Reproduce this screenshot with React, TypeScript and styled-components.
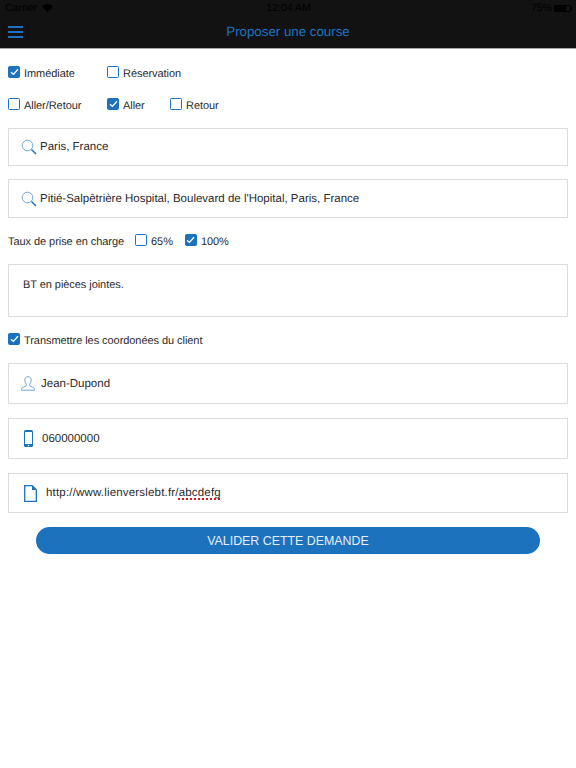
import styled, { createGlobalStyle } from "styled-components"

const GlobalStyle = createGlobalStyle`
    html, body {
        margin: 0;
        padding: 0;
        background: #ffffff;
        font-family: "Liberation Sans", Arial, sans-serif;
        color: #2b2b2b;
        text-rendering: geometricPrecision;
    }
`

const Page = styled.div`
    width: 576px;
    height: 768px;
    overflow: hidden;
    display: flex;
    flex-direction: column;
`

const Header = styled.header`
    height: 49px;
    box-sizing: border-box;
    background: #121212;
    border-bottom: 1px solid #a8a8a8;
    display: flex;
    flex-direction: column;
`

const StatusBar = styled.div`
    height: 16px;
    padding: 0 4px 0 5px;
    display: grid;
    grid-template-columns: 1fr auto 1fr;
    align-items: center;
    font-size: 10.5px;
    color: #000000;
`

const StatusLeft = styled.div`
    display: flex;
    align-items: center;
    gap: 5px;
`

const StatusRight = styled.div`
    display: flex;
    align-items: center;
    justify-content: flex-end;
    gap: 2px;
`

const Battery = styled.span`
    width: 17px;
    height: 7px;
    border: 1px solid #000000;
    box-sizing: border-box;
    border-radius: 1px;
    background: linear-gradient(to right, #000 75%, transparent 75%);
`

const BatteryTip = styled.span`
    width: 1px;
    height: 3px;
    margin-left: -2px;
    background: #000000;
`

const NavBar = styled.div`
    flex: 1;
    position: relative;
    display: flex;
    align-items: center;
    justify-content: center;
    padding-bottom: 1px;
`

const MenuButton = styled.div`
    position: absolute;
    left: 8px;
    top: 10px;
    width: 15px;
    height: 12px;
    display: flex;
    flex-direction: column;
    justify-content: space-between;
`

const MenuLine = styled.span`
    height: 2px;
    background: #1c72bd;
`

const Title = styled.h1`
    margin: 0;
    font-size: 13.3px;
    font-weight: normal;
    color: #1c72bd;
`

const Form = styled.div`
    display: flex;
    flex-direction: column;
    padding: 0 8px;
`

const CheckRow = styled.div<{ $top: number }>`
    display: flex;
    margin-top: ${(p) => p.$top}px;
    height: 16px;
`

const CheckItem = styled.label<{ $width?: number }>`
    display: flex;
    align-items: center;
    gap: 4px;
    font-size: 11px;
    letter-spacing: -0.06px;
    ${(p) => (p.$width ? `width: ${p.$width}px;` : "")}
`

const Box = styled.span<{ $checked?: boolean }>`
    width: 12px;
    height: 12px;
    box-sizing: border-box;
    border: 1.5px solid #1c72bd;
    border-radius: 1.5px;
    background: ${(p) => (p.$checked ? "#1c72bd" : "#ffffff")};
    display: flex;
    align-items: center;
    justify-content: center;
    margin-bottom: 4px;
    flex-shrink: 0;
`

const Field = styled.div<{ $top: number; $height: number; $gap: number; $iconLeft: number }>`
    margin-top: ${(p) => p.$top}px;
    height: ${(p) => p.$height}px;
    box-sizing: border-box;
    border: 1px solid #dcdcdc;
    display: flex;
    align-items: center;
    gap: ${(p) => p.$gap}px;
    padding-left: ${(p) => p.$iconLeft}px;
    font-size: 11.5px;
`

const NoteField = styled.div`
    margin-top: 14px;
    height: 53px;
    box-sizing: border-box;
    border: 1px solid #dcdcdc;
    padding: 14px 14px;
    font-size: 11px;
    letter-spacing: -0.06px;
`

const RateRow = styled.div`
    display: flex;
    align-items: center;
    margin-top: 16px;
    height: 16px;
    font-size: 11px;
    letter-spacing: -0.06px;
`

const RateLabel = styled.span`
    margin-right: 11px;
`

const RateOption = styled(CheckItem)`
    margin-right: 12px;
`

const UrlText = styled.span`
    letter-spacing: 0.18px;
`

const Misspelled = styled.span`
    text-decoration: underline dotted #e0141e 1.5px;
    text-underline-offset: 2px;
`

const Submit = styled.button`
    margin: 14px 28px 0;
    height: 27px;
    border: none;
    border-radius: 14px;
    background: #1c72bd;
    color: #e6eff8;
    font-family: inherit;
    font-size: 12.4px;
    padding: 0;
`

const Tick = () => (
    <svg width="9" height="8" viewBox="0 0 9 8">
        <path d="M1 4.2 L3.4 6.4 L8 1.2" fill="none" stroke="#ffffff" strokeWidth="1.3" />
    </svg>
)

const Check = ({ checked }: { checked?: boolean }) => <Box $checked={checked}>{checked && <Tick />}</Box>

const SearchIcon = () => (
    <svg width="16" height="16" viewBox="0 0 16 16">
        <circle cx="6.5" cy="6.5" r="5.3" fill="none" stroke="#6aa8db" strokeWidth="1" />
        <path d="M10.5 10.5 L15 15" stroke="#1c72bd" strokeWidth="1.4" />
    </svg>
)

const UserIcon = () => (
    <svg width="14" height="15" viewBox="0 0 14 15">
        <path
            d="M7 .7c-2 0-3.200 1.500-3.200 3.500 0 1.600.7 3 1.400 3.800.3.400.2 1.500-.3 2-.8.8-3.300 1.300-4.100 2.400-.2.400-.3 1-.3 1.800h13c0-.8-.1-1.400-.3-1.800-.8-1.100-3.300-1.600-4.100-2.400-.5-.5-.6-1.600-.3-2 .7-.8 1.400-2.200 1.400-3.800C10.200 2.200 9 .7 7 .7z"
            fill="none"
            stroke="#6aa8db"
            strokeWidth="1"
        />
    </svg>
)

const PhoneIcon = () => (
    <svg width="9" height="17" viewBox="0 0 9 17">
        <rect x="0" y="0" width="9" height="17" rx="1.500" fill="#1c72bd" />
        <rect x="1" y="2" width="7" height="12" fill="#ffffff" />
        <circle cx="4.500" cy="15.500" r=".7" fill="#ffffff" />
    </svg>
)

const FileIcon = () => (
    <svg width="13" height="17" viewBox="0 0 13 17">
        <path d="M.7.7h7.500l4.100 4.100v11.500H.7z" fill="none" stroke="#1c72bd" strokeWidth="1.300" />
        <path d="M8 .7v4.300h4.300z" fill="#1c72bd" />
    </svg>
)

const WifiIcon = () => (
    <svg width="11" height="8" viewBox="0 0 11 8">
        <path d="M5.500 8 L0 2.500 C3 -.8 8 -.8 11 2.500z" fill="#000000" />
    </svg>
)

const App = () => {
    return (
        <Page>
            <GlobalStyle />
            <Header>
                <StatusBar>
                    <StatusLeft>
                        <span>Carrier</span>
                        <WifiIcon />
                    </StatusLeft>
                    <span>12:04 AM</span>
                    <StatusRight>
                        <span>75%</span>
                        <Battery />
                        <BatteryTip />
                    </StatusRight>
                </StatusBar>
                <NavBar>
                    <MenuButton>
                        <MenuLine />
                        <MenuLine />
                        <MenuLine />
                    </MenuButton>
                    <Title>Proposer une course</Title>
                </NavBar>
            </Header>
            <Form>
                <CheckRow $top={17}>
                    <CheckItem $width={99}>
                        <Check checked />
                        Immédiate
                    </CheckItem>
                    <CheckItem>
                        <Check />
                        Réservation
                    </CheckItem>
                </CheckRow>
                <CheckRow $top={16}>
                    <CheckItem $width={99}>
                        <Check />
                        Aller/Retour
                    </CheckItem>
                    <CheckItem $width={63}>
                        <Check checked />
                        Aller
                    </CheckItem>
                    <CheckItem>
                        <Check />
                        Retour
                    </CheckItem>
                </CheckRow>
                <Field $top={14} $height={38} $gap={3} $iconLeft={12}>
                    <SearchIcon />
                    Paris, France
                </Field>
                <Field $top={13} $height={39} $gap={3} $iconLeft={12}>
                    <SearchIcon />
                    Pitié-Salpêtrière Hospital, Boulevard de l'Hopital, Paris, France
                </Field>
                <RateRow>
                    <RateLabel>Taux de prise en charge</RateLabel>
                    <RateOption>
                        <Check />
                        65%
                    </RateOption>
                    <RateOption>
                        <Check checked />
                        100%
                    </RateOption>
                </RateRow>
                <NoteField>BT en pièces jointes.</NoteField>
                <CheckRow $top={16}>
                    <CheckItem>
                        <Check checked />
                        Transmettre les coordonées du client
                    </CheckItem>
                </CheckRow>
                <Field $top={14} $height={41} $gap={6} $iconLeft={12}>
                    <UserIcon />
                    Jean-Dupond
                </Field>
                <Field $top={14} $height={41} $gap={9} $iconLeft={15}>
                    <PhoneIcon />
                    060000000
                </Field>
                <Field $top={14} $height={40} $gap={9} $iconLeft={15}>
                    <FileIcon />
                    <UrlText>
                        http://www.lienverslebt.fr/<Misspelled>abcdefg</Misspelled>
                    </UrlText>
                </Field>
                <Submit>VALIDER CETTE DEMANDE</Submit>
            </Form>
        </Page>
    )
}
export default App
